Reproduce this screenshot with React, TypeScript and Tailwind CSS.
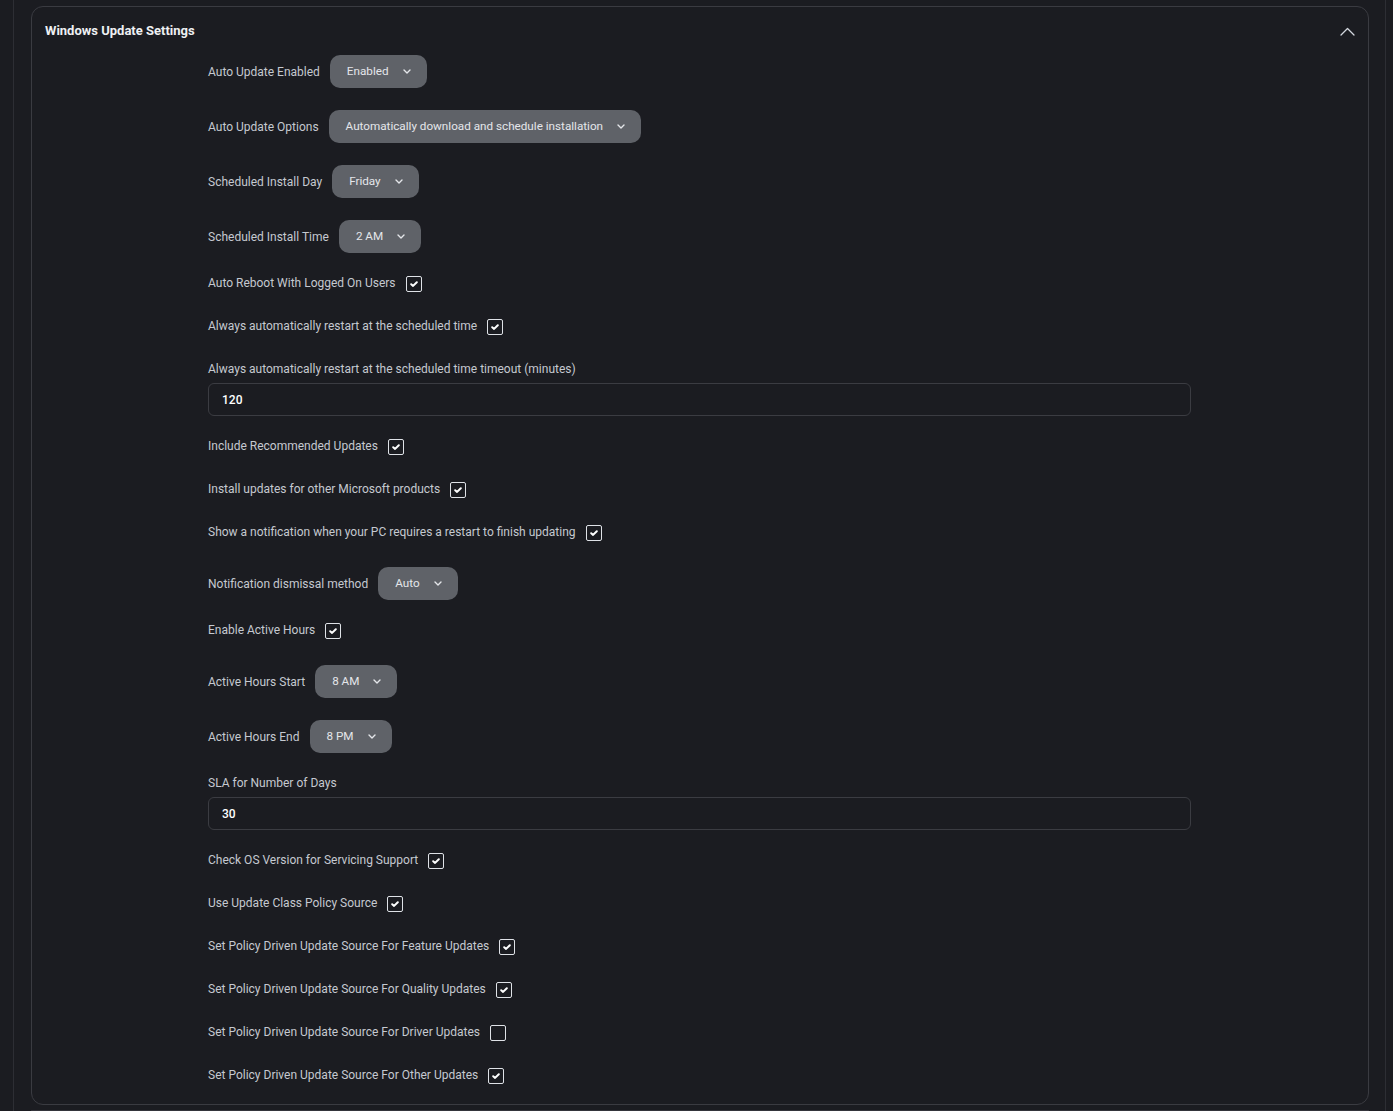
import React from "react";

type Row =
  | { kind: "select"; label: string; value: string }
  | { kind: "check"; label: string; checked: boolean }
  | { kind: "input"; label: string; value: string };

const rows: Row[] = [
  { kind: "select", label: "Auto Update Enabled", value: "Enabled" },
  { kind: "select", label: "Auto Update Options", value: "Automatically download and schedule installation" },
  { kind: "select", label: "Scheduled Install Day", value: "Friday" },
  { kind: "select", label: "Scheduled Install Time", value: "2 AM" },
  { kind: "check", label: "Auto Reboot With Logged On Users", checked: true },
  { kind: "check", label: "Always automatically restart at the scheduled time", checked: true },
  { kind: "input", label: "Always automatically restart at the scheduled time timeout (minutes)", value: "120" },
  { kind: "check", label: "Include Recommended Updates", checked: true },
  { kind: "check", label: "Install updates for other Microsoft products", checked: true },
  { kind: "check", label: "Show a notification when your PC requires a restart to finish updating", checked: true },
  { kind: "select", label: "Notification dismissal method", value: "Auto" },
  { kind: "check", label: "Enable Active Hours", checked: true },
  { kind: "select", label: "Active Hours Start", value: "8 AM" },
  { kind: "select", label: "Active Hours End", value: "8 PM" },
  { kind: "input", label: "SLA for Number of Days", value: "30" },
  { kind: "check", label: "Check OS Version for Servicing Support", checked: true },
  { kind: "check", label: "Use Update Class Policy Source", checked: true },
  { kind: "check", label: "Set Policy Driven Update Source For Feature Updates", checked: true },
  { kind: "check", label: "Set Policy Driven Update Source For Quality Updates", checked: true },
  { kind: "check", label: "Set Policy Driven Update Source For Driver Updates", checked: false },
  { kind: "check", label: "Set Policy Driven Update Source For Other Updates", checked: true },
];

const SmallChevron = () => (
  <svg width="8" height="5" viewBox="0 0 8 5" fill="none">
    <path d="M1 1l3 3 3-3" stroke="currentColor" strokeWidth="1.4" strokeLinecap="round" strokeLinejoin="round" />
  </svg>
);

const CheckBox = ({ checked }: { checked: boolean }) => (
  <span className="mt-[1px] flex h-4 w-4 items-center justify-center rounded-[2px] border border-[#dfe2e7]">
    {checked && (
      <svg width="8" height="6" viewBox="0 0 8 6" fill="none">
        <path d="M1.2 3.2l1.9 1.7L6.8 1.2" stroke="#ffffff" strokeWidth="2" strokeLinecap="round" strokeLinejoin="round" />
      </svg>
    )}
  </span>
);

const FormRow = ({ row }: { row: Row }) => {
  if (row.kind === "select") {
    return (
      <div className="flex items-center gap-[10px]">
        <span>{row.label}</span>
        <div className="flex h-[33px] items-center gap-[14px] rounded-[10px] bg-[#5f6268] pl-[17px] pr-[16px] text-[11.7px] text-[#e4e6ea]">
          <span>{row.value}</span>
          <SmallChevron />
        </div>
      </div>
    );
  }
  if (row.kind === "check") {
    return (
      <div className="flex h-[21px] items-start gap-[10px]">
        <span className="leading-[17px]">{row.label}</span>
        <CheckBox checked={row.checked} />
      </div>
    );
  }
  return (
    <div className="flex flex-col gap-[6px]">
      <span className="leading-4">{row.label}</span>
      <div className="flex h-[33px] items-center rounded-[6px] border border-[#3b3c42] px-[13px] font-medium text-white">
        {row.value}
      </div>
    </div>
  );
};

export default function App() {
  return (
    <div className="h-[1111px] overflow-hidden bg-[#1b1c21] font-['Roboto','Liberation_Sans',sans-serif]">
      <div className="ml-[13px] mr-[7px] flex h-full flex-col border-x border-[#2d2e34] pl-[17px] pr-[16px]">
        <div className="mx-[8px] h-px bg-[#34353b]" />
        <section className="mt-[6px] rounded-[12px] border border-[#3a3b41] pb-[16px]">
          <div className="flex items-center justify-between pl-[13px] pr-[13px] pt-[16px] pb-[16px]">
            <h2 className="text-[13px] font-bold leading-4 text-[#eef0f3]">Windows Update Settings</h2>
            <svg width="15" height="9" viewBox="0 0 15 9" fill="none" className="text-[#d3d7de]">
              <path d="M1 8l6.5-6.5L14 8" stroke="currentColor" strokeWidth="1.3" strokeLinecap="round" strokeLinejoin="round" />
            </svg>
          </div>
          <div className="flex flex-col gap-[22px] pl-[176px] pr-[177px] text-[12px] text-[#c5c9d0]">
            {rows.map((row, i) => (
              <FormRow key={i} row={row} />
            ))}
          </div>
        </section>
        <div className="mt-[5px] h-[20px] rounded-t-[12px] border-x border-t border-[#34353b]" />
      </div>
    </div>
  );
}
